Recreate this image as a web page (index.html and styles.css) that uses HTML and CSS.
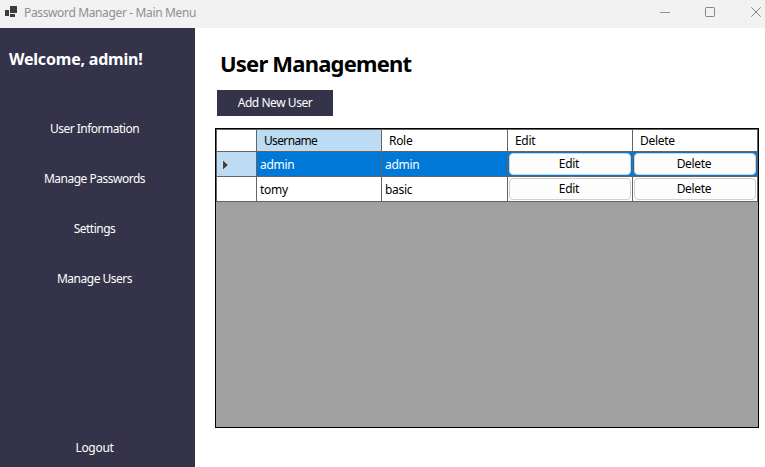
FILE: index.html
```html
<!DOCTYPE html>
<html lang="en">
<head>
<meta charset="utf-8">
<title>Password Manager - Main Menu</title>
<link rel="stylesheet" href="styles.css">
</head>
<body>
<div class="window">
  <header class="titlebar">
    <svg class="app-icon" width="12" height="11" viewBox="0 0 12 11" shape-rendering="crispEdges" fill="#3d3d3d"><path d="M5 0h7v7H5zM0 4h4v6H0zM5 8h5v3H5z"/></svg>
    <span class="caption">Password Manager - Main Menu</span>
    <div class="controls">
      <svg width="10" height="11" viewBox="0 0 10 11"><path d="M0 5.5h10" stroke="#929292"/></svg>
      <svg width="10" height="11" viewBox="0 0 10 11"><rect x=".5" y=".5" width="9" height="9" rx=".8" fill="none" stroke="#858585"/></svg>
      <svg width="10" height="11" viewBox="0 0 10 11"><path d="M.3.3l9.4 9.4M9.7.3L.3 9.7" stroke="#858585" fill="none"/></svg>
    </div>
  </header>
  <div class="body">
    <nav class="sidebar">
      <div class="welcome">Welcome, admin!</div>
      <div class="menu">
        <a class="item">User Information</a>
        <a class="item">Manage Passwords</a>
        <a class="item">Settings</a>
        <a class="item">Manage Users</a>
      </div>
      <a class="item logout">Logout</a>
    </nav>
    <main class="content">
      <h1 class="heading">User Management</h1>
      <button class="add">Add New User</button>
      <div class="grid">
        <div class="row head">
          <div class="cell"></div>
          <div class="cell current">Username</div>
          <div class="cell">Role</div>
          <div class="cell">Edit</div>
          <div class="cell">Delete</div>
        </div>
        <div class="row selected">
          <div class="cell marker"><svg width="8" height="12" viewBox="0 0 8 12"><path d="M.5.5L7 6 .5 11.500z" fill="#f4e9e0"/><path d="M1 1.500L6 6 1 10.500z" fill="#404040"/></svg></div>
          <div class="cell">admin</div>
          <div class="cell">admin</div>
          <div class="cell action"><button class="btn">Edit</button></div>
          <div class="cell action"><button class="btn">Delete</button></div>
        </div>
        <div class="row">
          <div class="cell"></div>
          <div class="cell">tomy</div>
          <div class="cell">basic</div>
          <div class="cell action"><button class="btn">Edit</button></div>
          <div class="cell action"><button class="btn">Delete</button></div>
        </div>
      </div>
    </main>
  </div>
</div>
</body>
</html>
```

FILE: styles.css
```css
* { box-sizing: border-box; }
body {
  margin: 0;
  font: 12px/16px "Noto Sans", "Open Sans", sans-serif;
  letter-spacing: -0.3px;
  color: #000;
  background: #fff;
}
button { font: inherit; letter-spacing: inherit; padding: 0; }
.window { height: 467px; display: flex; flex-direction: column; overflow: hidden; }
.titlebar {
  height: 28px;
  flex: none;
  display: flex;
  background: #f2f2f2;
  color: #8f8f8f;
}
.app-icon { margin: 6px 7px 0 5px; }
.caption { padding-top: 5px; white-space: nowrap; letter-spacing: -0.36px; }
.controls { margin: 7px 4px 0 auto; display: flex; gap: 36px; }
.controls svg:first-child { margin-right: -1px; }
.body { flex: 1; display: flex; min-height: 0; }
.sidebar {
  width: 195px;
  flex: none;
  display: flex;
  flex-direction: column;
  background: #34334a;
  color: #fff;
  letter-spacing: -0.5px;
}
.welcome { padding: 19px 0 0 9px; font-size: 16px; line-height: 24px; font-weight: 700; white-space: nowrap; letter-spacing: -0.2px; }
.menu { margin-top: 33px; }
.item { display: flex; height: 50px; align-items: center; justify-content: center; padding-right: 6px; }
.logout { margin-top: auto; margin-bottom: -6px; letter-spacing: -0.3px; }
.content { flex: 1; padding: 20px 6px 0 20px; display: flex; flex-direction: column; }
.heading { margin: 0 0 12px 5px; font-size: 22px; line-height: 30px; font-weight: 700; white-space: nowrap; letter-spacing: -0.8px; }
.add { width: 116px; height: 26px; margin-left: 2px; border: 0; background: #34334a; color: #fff; letter-spacing: -0.45px; }
.grid { margin-top: 12px; width: 544px; height: 300px; border: 1px solid #000; background: #a0a0a0; }
.row { display: grid; grid-template-columns: 41px 125px 126px 125px 125px; height: 25px; background: #fff; }
.cell { border: 0 solid #646464; border-width: 0 1px 1px 0; padding: 5px 0 0 3px; }
.cell:first-child { border-left-width: 1px; }
.head { height: 23px; }
.head .cell { border-top-width: 1px; padding: 3px 0 0 7px; }
.head .current { background: #bcdcf4; letter-spacing: -0.65px; }
.selected { background: #0078d7; color: #fff; }
.marker { background: #bcdcf4; padding: 7px 0 0 5px; }
.marker svg { display: block; }
.cell.action { padding: 1px; display: flex; }
.btn { flex: 1; border: 1px solid #d0d0d0; border-radius: 4px; background: #fdfdfd; color: #000; padding-right: 2px; }
```
